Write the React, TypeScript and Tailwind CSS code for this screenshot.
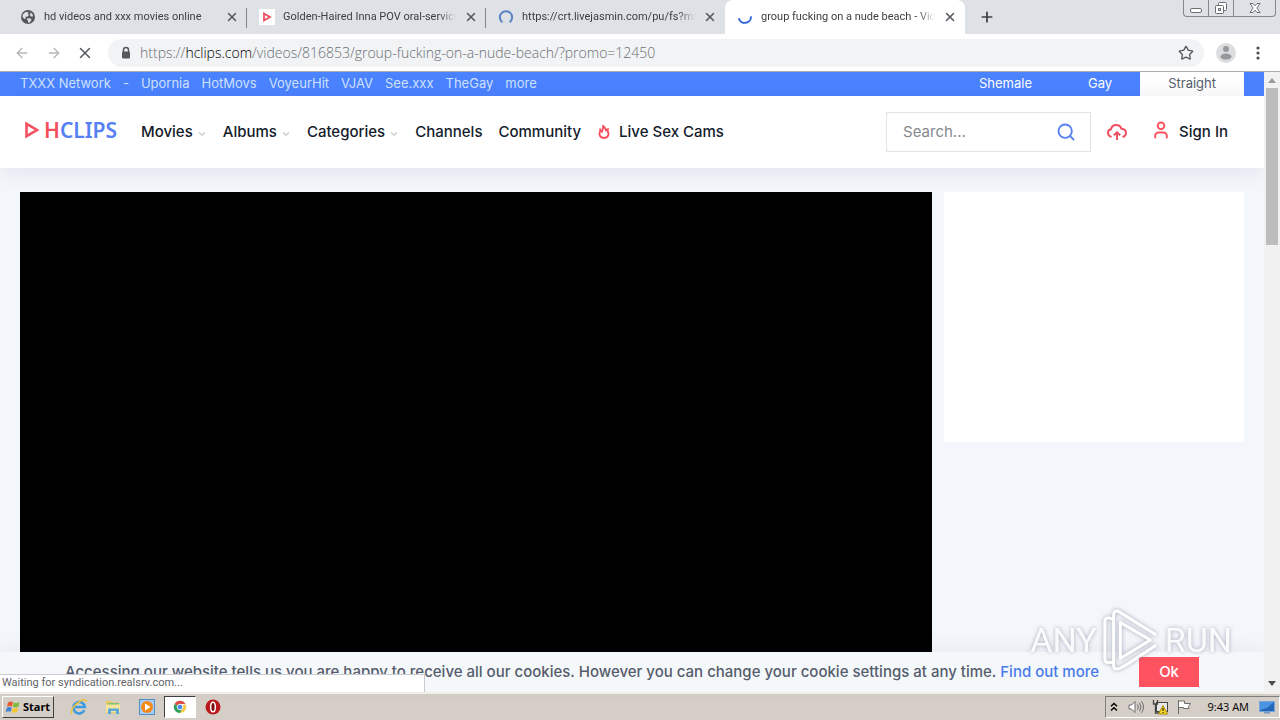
import React from 'react';
import { ChevronDown, Plus, Search, User, X, ArrowLeft, ArrowRight, Star } from 'lucide-react';

const tabs = [
  { title: 'hd videos and xxx movies online', icon: 'globe', active: false },
  { title: 'Golden-Haired Inna POV oral-service', icon: 'play', active: false },
  { title: 'https://crt.livejasmin.com/pu/fs?ms_', icon: 'ring', active: false },
  { title: 'group fucking on a nude beach - Vide', icon: 'spinner', active: true },
];

const network = ['Upornia', 'HotMovs', 'VoyeurHit', 'VJAV', 'See.xxx', 'TheGay', 'more'];

const menu = [
  { label: 'Movies', more: true },
  { label: 'Albums', more: true },
  { label: 'Categories', more: true },
  { label: 'Channels', more: false },
  { label: 'Community', more: false },
];

const TabIcon = ({ name }: { name: string }) => {
  if (name === 'globe') {
    return (
      <svg viewBox="0 0 16 16" className="h-4 w-4 shrink-0">
        <circle cx="8" cy="8" r="7" fill="#54585d" />
        <path d="M3 5.2 5.6 3l3 .3-.9 1.6 1.5 1-2 1.9H5.3l.5 1.6-1.6.5L2.4 7.6z" fill="#dee1e6" />
        <path d="M10.8 3.6 13 6l-.4 1.8-2-.6-.8-1.6zM7.6 9.2l3 .4 1 1.4-2 2.6-1.7.2.3-2.1-1.4-1.2z" fill="#dee1e6" />
      </svg>
    );
  }
  if (name === 'play') {
    return (
      <svg viewBox="0 0 16 16" className="h-4 w-4 shrink-0">
        <path d="M0 0h16v16H0z" fill="#fff" />
        <path d="M5 4.5v7L11 8z" fill="none" stroke="#ee4d5e" strokeWidth="1.8" />
      </svg>
    );
  }
  if (name === 'ring') {
    return (
      <svg viewBox="0 0 16 16" className="h-4 w-4 shrink-0">
        <path d="M4.4 13.2a6.1 6.1 0 1 1 7.2 0" fill="none" stroke="#5b83c4" strokeWidth="2" />
      </svg>
    );
  }
  return (
    <svg viewBox="0 0 16 16" className="h-4 w-4 shrink-0">
      <path d="M1.8 9.2a6.2 6.2 0 0 0 12.2-1.8" fill="none" stroke="#2f68d8" strokeWidth="2" />
    </svg>
  );
};

const TabStrip = () => (
  <div className="flex h-[34px] shrink-0 bg-[#dee1e6] pl-2 font-['Roboto',sans-serif] text-[11px] text-[#3c4043]">
    {tabs.map((tab, i) => (
      <div
        key={tab.title}
        className={
          tab.active
            ? 'flex w-60 min-w-0 items-center gap-2 rounded-t-lg bg-white pr-2 pl-3'
            : 'relative flex w-[239px] min-w-0 items-center gap-2 pr-2 pl-3'
        }
      >
        <TabIcon name={tab.icon} />
        <span className="min-w-0 flex-1 overflow-hidden mask-r-from-90% whitespace-nowrap">{tab.title}</span>
        <button aria-label="Close tab">
          <X size={14} strokeWidth={2.6} className="text-[#55595e]" />
        </button>
        {!tab.active && i < 2 && <span className="absolute top-2 right-0 h-5 w-px bg-[#80858b]" />}
      </div>
    ))}
    <button aria-label="New tab" className="ml-3.5 self-center">
      <Plus size={16} strokeWidth={2.6} />
    </button>
    <div className="mr-1 ml-auto flex h-[17px] rounded-b border border-t-0 border-[#85888d] text-[#6a6d72]">
      <button aria-label="Minimize" className="flex w-[25px] items-center justify-center border-r border-[#85888d]">
        <svg viewBox="0 0 12 12" className="h-3 w-3">
          <rect x="0.5" y="6.5" width="11" height="4" rx="1.5" fill="#fff" stroke="currentColor" />
        </svg>
      </button>
      <button aria-label="Restore" className="flex w-[25px] items-center justify-center border-r border-[#85888d]">
        <svg viewBox="0 0 14 14" className="h-3.5 w-3.5">
          <rect x="4.5" y="1.5" width="8" height="8" rx="1" fill="#fff" stroke="currentColor" />
          <rect x="1.5" y="4.5" width="8" height="8" rx="1" fill="#fff" stroke="currentColor" />
          <rect x="4.5" y="7.5" width="2" height="2" fill="none" stroke="currentColor" />
        </svg>
      </button>
      <button aria-label="Close" className="flex w-[41px] items-center justify-center">
        <svg viewBox="0 0 12 12" className="h-3 w-3">
          <path d="M1 1.5h3l2 2.3 2-2.3h3L7.9 6l3.1 4.5H8L6 8.2l-2 2.3H1L4.1 6z" fill="#fff" stroke="currentColor" />
        </svg>
      </button>
    </div>
  </div>
);

const AddressBar = () => (
  <div className="flex h-[38px] shrink-0 items-center border-b border-[#a9abae] bg-white pr-3 pl-3.5">
    <button aria-label="Back" className="mr-4">
      <ArrowLeft size={16} className="text-[#b4b6b9]" />
    </button>
    <button aria-label="Forward" className="mr-3.5">
      <ArrowRight size={16} className="text-[#b4b6b9]" />
    </button>
    <button aria-label="Stop" className="mr-3.5">
      <X size={18} className="text-[#55595e]" />
    </button>
    <div className="flex h-7 flex-1 items-center rounded-full bg-[#f1f3f4] pr-2.5 pl-3">
      <svg viewBox="0 0 12 14" className="mr-2 h-3.5 w-3">
        <path d="M3.5 6V4a2.5 2.5 0 0 1 5 0v2" fill="none" stroke="#55595e" strokeWidth="1.5" />
        <rect x="2" y="5.5" width="8" height="7" rx="1" fill="#55595e" />
      </svg>
      <span className="flex-1 font-['Open_Sans',sans-serif] text-sm font-light text-[#6b6f74]">
        https://<span className="text-black">hclips.com</span>/videos/816853/group-fucking-on-a-nude-beach/?promo=12450
      </span>
      <button aria-label="Bookmark">
        <Star size={16} className="text-[#55595e]" />
      </button>
    </div>
    <svg viewBox="0 0 20 20" className="mx-3 h-5 w-5">
      <circle cx="10" cy="10" r="10" fill="#dcdddf" />
      <circle cx="10" cy="6" r="3" fill="#96999c" />
      <ellipse cx="10" cy="13.6" rx="5.5" ry="3" fill="#96999c" />
    </svg>
    <button aria-label="Menu" className="px-2">
      <svg viewBox="0 0 4 14" className="h-3.5 w-1" fill="#4a4d51">
        <circle cx="2" cy="2" r="1.6" />
        <circle cx="2" cy="7" r="1.6" />
        <circle cx="2" cy="12" r="1.6" />
      </svg>
    </button>
  </div>
);

const Header = () => (
  <>
    <div className="flex h-6 shrink-0 items-center justify-between bg-[#4b83ff] px-5 text-[13px] text-[#cfe2ff]">
      <div className="flex gap-3">
        <span>TXXX Network</span>
        <span>-</span>
        {network.map((n) => (
          <a key={n} href="#">{n}</a>
        ))}
      </div>
      <div className="flex h-full items-center text-white">
        <a href="#" className="px-7">Shemale</a>
        <a href="#" className="px-7">Gay</a>
        <a href="#" className="flex h-full items-center bg-white px-7 text-[#55606c]">Straight</a>
      </div>
    </div>

    <header className="flex h-[72px] shrink-0 items-center bg-white px-5 text-[15px] font-medium text-[#141c2c] shadow-[0_2px_24px_rgba(60,50,110,0.1)]">
      <a href="#" className="mr-6 flex items-center gap-1 pb-1 pl-1 font-['Noto_Sans',sans-serif] text-[21px] leading-6 font-semibold">
        <svg viewBox="0 0 16 18" className="h-[18px] w-4">
          <path d="M2.5 2.8v12.4L13 9z" fill="none" stroke="#f4515f" strokeWidth="2.6" />
        </svg>
        <span className="text-[#5680f4]">
          <span className="text-[#f4515f]">H</span>CLIPS
        </span>
      </a>
      <nav className="flex gap-4">
        {menu.map((m) => (
          <a key={m.label} href="#" className="flex items-center gap-1">
            {m.label}
            {m.more && <ChevronDown size={10} strokeWidth={3.5} className="mt-1 text-[#cbced3]" />}
          </a>
        ))}
        <a href="#" className="flex items-center gap-2">
          <svg viewBox="0 0 14 14" className="h-3.5 w-3.5" fill="none" stroke="#f4515f" strokeWidth="1.9">
            <path d="M3.200 3.500v3.500M3 7C1.500 10 3.600 13 7 13s5.500-3 4-6c-.3-.9-.4-1.700-.2-2.900-1 .3-1.500 1-1.700 2C9 4 8 2.500 6.200 1c.3 2-.3 3-1 4.500-.3.800-.2 1.500.3 2" />
          </svg>
          Live Sex Cams
        </a>
      </nav>
      <label className="ml-auto flex h-10 w-[205px] items-center border border-[#e2e4e8] pr-3.5 pl-4 font-normal">
        <input type="text" aria-label="Search" placeholder="Search..." className="w-0 flex-1 outline-none placeholder:text-[#85898f]" />
        <Search size={20} strokeWidth={2.2} className="text-[#5680f4]" />
      </label>
      <button aria-label="Upload" className="ml-4">
        <svg viewBox="0 0 20 18" className="h-[18px] w-5" fill="none" stroke="#ee4d60" strokeWidth="1.9">
          <path d="M4.500 14C2.400 13.400 1 12 1 9.800c0-1.900 1.200-3.200 3-3.600C4.600 3.500 6.500 2 9.200 2c2.600 0 4.500 1.400 5.200 3.700 2.700.2 4.600 1.700 4.600 4.300 0 2-1.300 3.500-3.500 4M10 17V9.500M6.800 12.300 10 9.200l3.200 3.100" />
        </svg>
      </button>
      <button className="mr-4 ml-6 flex items-center gap-2">
        <User size={20} strokeWidth={2.3} className="-mt-1 text-[#ff5260]" />
        Sign In
      </button>
    </header>
  </>
);

const Watermark = () => (
  <div className="pointer-events-none absolute right-12 bottom-5 flex items-center gap-1 font-['Liberation_Sans_Narrow','Roboto',sans-serif] text-[34px] leading-10 text-white/90 drop-shadow-[0_0_2px_rgba(100,110,130,0.6)]">
    ANY
    <svg viewBox="0 0 62 66" className="h-16 w-[60px]" fill="none" stroke="#fff" strokeWidth="3" strokeLinejoin="round" strokeLinecap="round">
      <path d="M11 11C6 9 4 11 4 14v38c0 4 2 5 7 4" />
      <path d="M13 12v47c0 4 3 5 7 3l7-4M13 12V7c0-4 3-5 6-3l37 23" />
      <path d="M20 15v37l31-19z" />
      <path d="M27 58l29-19" />
    </svg>
    RUN
  </div>
);

const ScrollBar = () => (
  <div className="flex w-4 shrink-0 flex-col items-center bg-[#f1f1f1]">
    <svg viewBox="0 0 16 16" className="h-4 w-4">
      <path d="M4 11l4-5 4 5z" fill="#9b9b9b" />
    </svg>
    <div className="h-[157px] w-3 bg-[#bdbdbd]" />
    <svg viewBox="0 0 16 16" className="mt-auto h-4 w-4">
      <path d="M4 5l4 5 4-5z" fill="#4c4c4c" />
    </svg>
  </div>
);

const Taskbar = () => (
  <div className="flex h-7 shrink-0 items-center border-t-2 border-[#f4f2ee] bg-[#d5cec6] pl-0.5 font-['Open_Sans',sans-serif] text-[11px] text-black">
    <button className="flex h-[22px] w-[52px] items-center gap-0.5 border border-t-white border-r-[#404040] border-b-[#404040] border-l-white pl-0.5 font-['Noto_Sans',sans-serif] font-bold">
      <svg viewBox="0 0 16 16" className="h-4 w-4 shrink-0">
        <path d="M3 3.500C5 2 6.500 2.400 8 3.200L7 7.500C5.500 6.700 4 6.600 2 7.700z" fill="#e85b2c" />
        <path d="M8.800 3.500c2 1 3.800.8 5.700-.5l-1.200 4.500c-1.800 1.200-3.600 1.200-5.400.3z" fill="#7fb93c" />
        <path d="M1.800 8.700c1.800-1.100 3.500-1 5-.2l-1.100 4.300c-1.500-.8-3.200-.8-5 .3z" fill="#3f7fd6" />
        <path d="M7.600 8.900c1.800.9 3.600.8 5.400-.4L12 12.700c-1.900 1.300-3.700 1.300-5.400.4z" fill="#f7c52d" />
      </svg>
      Start
    </button>
    <div className="ml-2 flex items-center">
      <button aria-label="Internet Explorer" className="flex w-[34px] justify-center">
        <svg viewBox="0 0 18 18" className="h-[18px] w-[18px]" fill="none">
          <path d="M14.300 12.200A5.700 5.700 0 1 1 14.800 9H4.500" stroke="#3c9be0" strokeWidth="2.600" />
          <path d="M2 16C-.5 13 5 5.500 11 2.700c3.500-1.700 5.700-.8 5 1.300" stroke="#ecc03f" strokeWidth="1.500" />
        </svg>
      </button>
      <button aria-label="Explorer" className="flex w-[34px] justify-center">
        <svg viewBox="0 0 18 18" className="h-[18px] w-[18px]">
          <path d="M2 3h5l1 1.500h7V15H2z" fill="#e9c85e" />
          <path d="M4 5h11v4H4z" fill="#79c37c" />
          <path d="M2 6.500h14V14H2z" fill="#f8e49a" />
          <path d="M4 16v-5.500h11V16h-3v-3H7v3z" fill="#58a9dc" />
        </svg>
      </button>
      <button aria-label="Media Player" className="flex w-[34px] justify-center">
        <svg viewBox="0 0 18 18" className="h-[18px] w-[18px]">
          <rect x="1.500" y="1.500" width="15" height="15" fill="#a9cdf0" stroke="#4e8fd0" />
          <circle cx="9" cy="9" r="6" fill="#f58a1c" />
          <path d="M7 5.500v7L12.500 9z" fill="#fff" />
        </svg>
      </button>
      <button aria-label="Chrome" className="flex h-[22px] w-8 items-center justify-center border border-t-[#404040] border-r-white border-b-white border-l-[#404040] bg-white">
        <svg viewBox="0 0 16 16" className="h-3.5 w-3.5">
          <path d="M8 8 1.900 4.500A7 7 0 0 1 14.100 4.500H8z" fill="#dd4b3e" />
          <path d="M8 8 1.900 4.500A7 7 0 0 0 8 15l3.100-5.200z" fill="#2f9e58" />
          <path d="M8 8l6.100-3.500A7 7 0 0 1 8 15l3-5z" fill="#fbcb43" />
          <circle cx="8" cy="8" r="3.200" fill="#4688f0" stroke="#fff" />
        </svg>
      </button>
      <button aria-label="Opera" className="flex w-[34px] justify-center">
        <svg viewBox="0 0 16 16" className="h-4 w-4">
          <circle cx="8" cy="8" r="7.500" fill="#b9191c" />
          <ellipse cx="8" cy="8" rx="2.300" ry="4.800" fill="#7c0b0e" stroke="#fff" strokeWidth="1.500" />
        </svg>
      </button>
    </div>
    <div className="ml-auto flex h-[22px] items-center border border-t-[#808080] border-r-white border-b-white border-l-[#808080] pr-1 pl-1">
      <svg viewBox="0 0 8 10" className="mr-2.5 h-2.5 w-2" fill="none" stroke="#000" strokeWidth="1.500">
        <path d="M1 4.200 4 1.500l3 2.700M1 8.500l3-2.700 3 2.700" />
      </svg>
      <svg viewBox="0 0 16 14" className="mr-2 h-3.5 w-4" fill="none" stroke="#6c6c6c">
        <path d="M1 5h2.500L7 1.500v11L3.500 9H1z" fill="#fff" />
        <path d="M9.500 4.500q1.700 2.500 0 5M11.500 2.800q3 4.200 0 8.400M13.500 1.200q4 5.800 0 11.600" />
      </svg>
      <svg viewBox="0 0 16 16" className="mr-2 h-4 w-4">
        <rect x="4.500" y="3.500" width="11" height="9" fill="#e8e8e8" stroke="#444" />
        <path d="M1.500 1v4h4V1M3.500 5v9H9" fill="none" stroke="#444" strokeWidth="1.300" />
        <path d="M11 6.500 15.500 15h-9z" fill="#fbdc2c" stroke="#ac8b00" />
        <path d="M11 9v3M11 13v1" stroke="#000" />
      </svg>
      <svg viewBox="0 0 16 16" className="mr-4 h-4 w-4" fill="#fff" stroke="#6c6c6c">
        <path d="M2.500 1v14M2.500 2h6v2.500h6L12.500 7.500l.5 2H7.500V8.500h-5z" />
      </svg>
      <span className="mr-2.5">9:43 AM</span>
      <svg viewBox="0 0 16 14" className="h-3.5 w-4">
        <rect x="0.500" y="1.500" width="15" height="10" fill="#2466b8" stroke="#76a5da" />
        <path d="M1 2h14L8 8 1 10z" fill="#4b94e0" />
        <path d="M5 12h6v1.500H5z" fill="#7796b8" />
      </svg>
    </div>
  </div>
);

const App = () => {
  return (
    <div className="flex h-screen flex-col overflow-hidden">
      <TabStrip />
      <AddressBar />

      <div className="relative flex min-h-0 flex-1 font-['Inter',sans-serif]">
        <div className="flex min-w-0 flex-1 flex-col bg-[#f3f6fa]">
          <Header />
          <main className="flex min-h-0 flex-1 gap-3 px-5 pt-6">
            <div className="flex-1 bg-black" />
            <aside className="h-[250px] w-[300px] bg-white" />
          </main>
          {/* Cookie notice */}
          <div className="flex h-10 shrink-0 items-center justify-center gap-10 bg-[#f5f8fb] text-[15px] font-medium text-[#555c6b] shadow-[0_-4px_16px_rgba(60,50,110,0.06)]">
            <p>
              Accessing our website tells us you are happy to receive all our cookies. However you can change your cookie settings at any time.{' '}
              <a href="#" className="text-[#4a7bea]">Find out more</a>
            </p>
            <button className="h-[30px] w-[60px] bg-[#ff5260] text-white">Ok</button>
          </div>
        </div>
        <ScrollBar />
        <Watermark />
        <div className="absolute bottom-0 left-0 h-[18px] w-[425px] border-t border-r border-[#c9cbce] bg-white pl-0.5 font-['Roboto',sans-serif] text-[11px] leading-4 text-[#5f6368]">
          Waiting for syndication.realsrv.com...
        </div>
      </div>

      <Taskbar />
    </div>
  );
};

export default App;
